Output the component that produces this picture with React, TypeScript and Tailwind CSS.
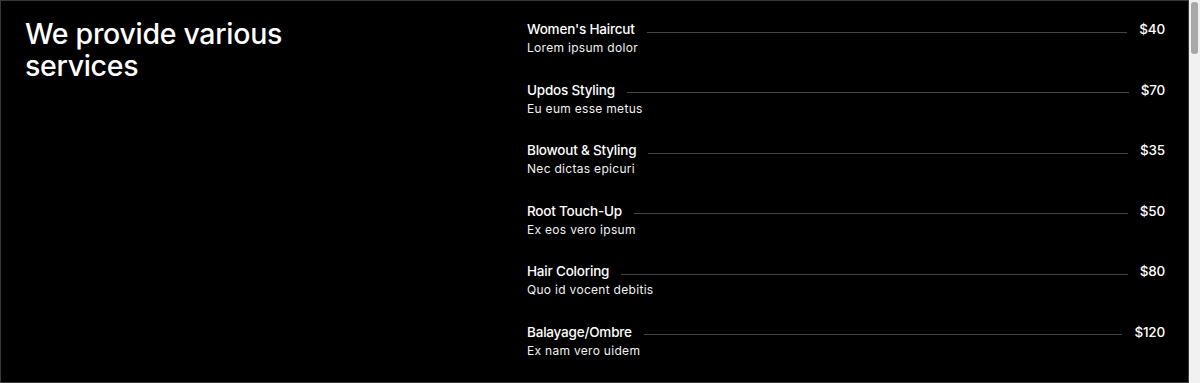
const services = [
  { name: "Women's Haircut", desc: "Lorem ipsum dolor", price: "$40" },
  { name: "Updos Styling", desc: "Eu eum esse metus", price: "$70" },
  { name: "Blowout & Styling", desc: "Nec dictas epicuri", price: "$35" },
  { name: "Root Touch-Up", desc: "Ex eos vero ipsum", price: "$50" },
  { name: "Hair Coloring", desc: "Quo id vocent debitis", price: "$80" },
  { name: "Balayage/Ombre", desc: "Ex nam vero uidem", price: "$120" },
];

export default function App() {
  return (
    <div className="flex h-[383px] w-[1200px] bg-white font-['Inter',sans-serif]">
      <div className="flex-1 border border-[#3a3a3a] bg-black text-white">
        <div className="flex pl-[24px] pr-[23px] pt-[14px]">
          <div className="w-[502px] shrink-0 pt-[3px]">
            <h2 className="text-[28.5px] leading-[32px] font-medium tracking-[-0.3px]">
              We provide various
              <br />
              services
            </h2>
          </div>
          <div className="flex flex-1 flex-col gap-[24.6px] pt-[5px]">
            {services.map((s) => (
              <div key={s.name}>
                <div className="flex items-center gap-[12px]">
                  <span className="text-[13.5px] leading-[18px] font-medium tracking-[-0.2px]">{s.name}</span>
                  <div className="mt-[6px] h-px flex-1 bg-[#444444]" />
                  <span className="text-[13.5px] leading-[18px] font-medium tracking-[-0.2px]">{s.price}</span>
                </div>
                <p className="mt-[2px] text-[12px] leading-[16px] tracking-[0.3px] text-[#f2f2f2]">
                  {s.desc}
                </p>
              </div>
            ))}
          </div>
        </div>
      </div>
      <div className="w-[11px] bg-[#f1f1f1] pt-[2px] pl-[2px] pr-[2px]">
        <div className="h-[52px] rounded-[3px] bg-[#a8a8a8]" />
      </div>
    </div>
  );
}
